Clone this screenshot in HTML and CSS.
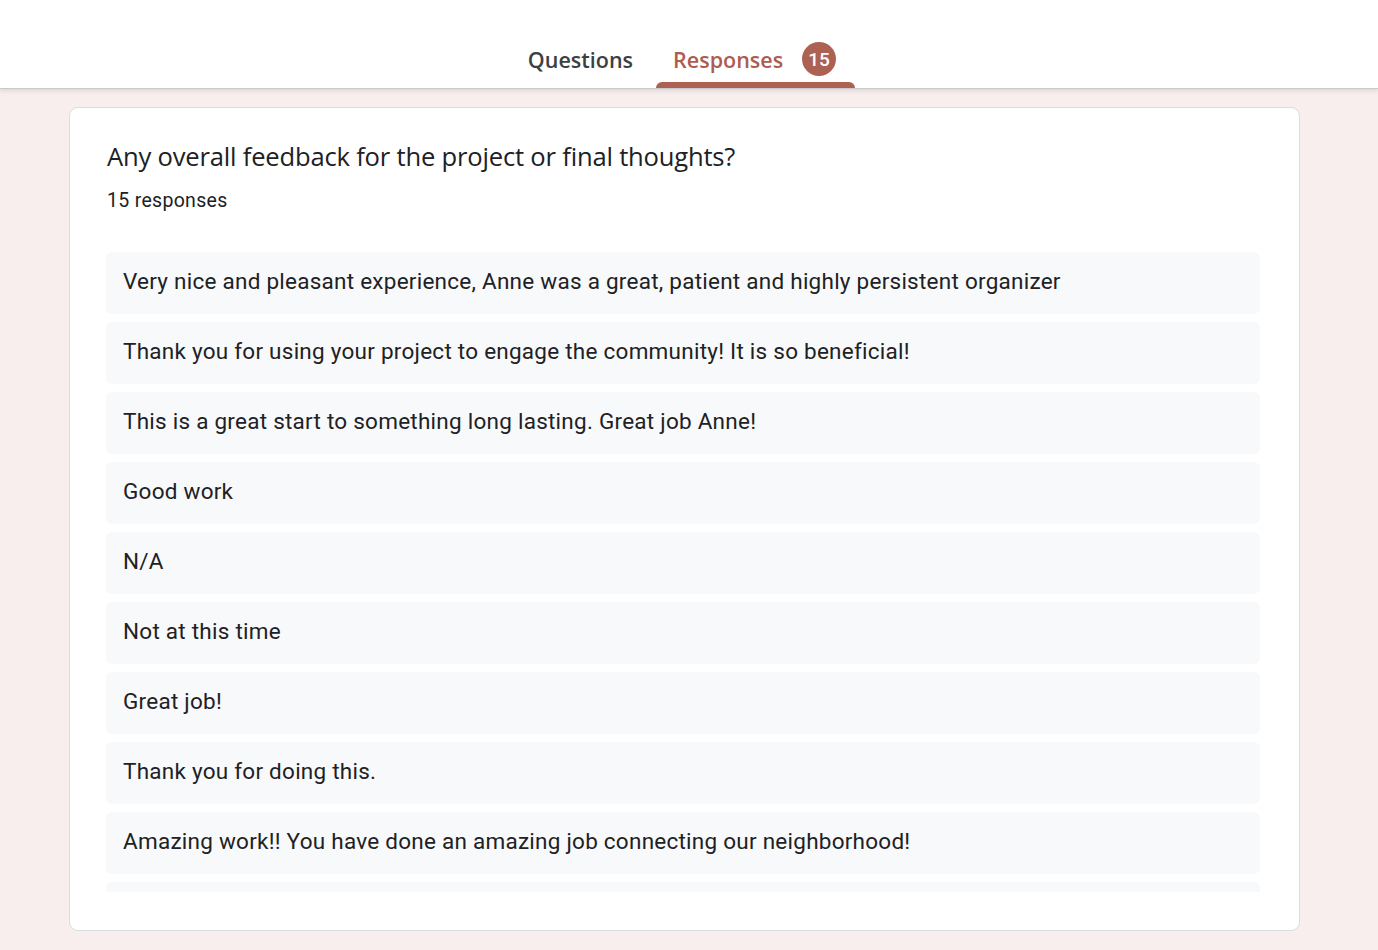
FILE: index.html
```html
<!DOCTYPE html>
<html>
<head>
<meta charset="utf-8">
<link rel="stylesheet" href="styles.css">
</head>
<body>
<header class="topbar">
  <nav class="tabs">
    <div class="tab">Questions</div>
    <div class="tab tab-active">Responses <span class="badge">15</span></div>
  </nav>
</header>
<main class="content">
  <section class="card">
    <h1 class="q-title">Any overall feedback for the project or final thoughts?</h1>
    <div class="q-count">15 responses</div>
    <div class="answers">
      <div class="answer">Very nice and pleasant experience, Anne was a great, patient and highly persistent organizer</div>
      <div class="answer">Thank you for using your project to engage the community! It is so beneficial!</div>
      <div class="answer">This is a great start to something long lasting. Great job Anne!</div>
      <div class="answer">Good work</div>
      <div class="answer">N/A</div>
      <div class="answer">Not at this time</div>
      <div class="answer">Great job!</div>
      <div class="answer">Thank you for doing this.</div>
      <div class="answer">Amazing work!! You have done an amazing job connecting our neighborhood!</div>
      <div class="answer"></div>
    </div>
  </section>
</main>
</body>
</html>
```

FILE: styles.css
```css
* { box-sizing: border-box; }
html, body {
  margin: 0;
  padding: 0;
  height: 100%;
}
body {
  background: #f7eeed;
  font-family: Roboto, "Liberation Sans", Arial, sans-serif;
  color: #202124;
  overflow: hidden;
}
.topbar {
  background: #fff;
  height: 89px;
  border-bottom: 1px solid #c9c8cc;
  box-shadow: 0 2px 4px rgba(60, 40, 40, 0.12);
  display: flex;
  justify-content: center;
  align-items: flex-end;
  position: relative;
  z-index: 1;
}
.tabs {
  display: flex;
  align-items: flex-end;
  margin-left: 5px;
}
.tab {
  font-family: "Open Sans", Roboto, sans-serif;
  font-weight: 600;
  font-size: 21.5px;
  color: #3c4043;
  height: 88px;
  display: flex;
  align-items: center;
  padding: 30px 23px 0 0;
}
.tab-active {
  color: #ad5c4f;
  padding: 30px 19px 0 17px;
  position: relative;
}
.tab-active::after {
  content: "";
  position: absolute;
  left: 0;
  right: 0;
  bottom: 0;
  height: 6px;
  background: #ad6152;
  border-radius: 6px 6px 0 0;
}
.badge {
  display: inline-flex;
  align-items: center;
  justify-content: center;
  width: 34px;
  height: 34px;
  border-radius: 50%;
  background: #ad6152;
  color: #fff;
  font-family: Roboto, sans-serif;
  font-weight: 500;
  font-size: 19px;
  margin-left: 19px;
  position: relative;
  top: 0;
}
.content {
  display: flex;
  justify-content: center;
  padding-top: 18px;
}
.card {
  width: 1231px;
  margin-left: -9px;
  height: 824px;
  background: #fff;
  border: 1px solid #dadce0;
  border-radius: 9px;
  padding: 31px 39px 0 36px;
}
.q-title {
  margin: 0;
  font-family: "Open Sans", Roboto, sans-serif;
  font-weight: 400;
  font-size: 25.6px;
  line-height: 36px;
  color: #202124;
  letter-spacing: -0.2px;
  padding-left: 1px;
}
.q-count {
  margin-top: 14px;
  font-size: 19.5px;
  line-height: 24px;
  letter-spacing: 0.3px;
  color: #202124;
  padding-left: 1px;
}
.answers {
  margin-top: 39px;
  height: 640px;
  overflow: hidden;
  display: flex;
  flex-direction: column;
  gap: 8px;
}
.answer {
  flex: none;
  height: 62px;
  background: #f8f9fa;
  border-radius: 6px;
  padding: 0 17px 5px;
  display: flex;
  align-items: center;
  font-size: 22.5px;
  letter-spacing: 0.25px;
  color: #202124;
}
```
